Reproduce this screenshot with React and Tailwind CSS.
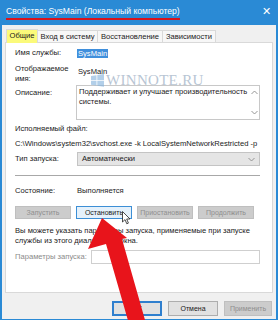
import React from "react";

const F = "font-['Liberation_Sans',Arial,sans-serif]";

function Chevron({ up = false, className = "" }) {
  return (
    <svg width="7" height="5" viewBox="0 0 7 5" className={className}>
      <path d={up ? "M0.5 4 L3.5 1 L6.5 4" : "M0.5 1 L3.5 4 L6.5 1"} fill="none" stroke="#8a8a8a" strokeWidth="0.9" />
    </svg>
  );
}

function Btn({ children, variant = "disabled", className = "" }) {
  const styles = {
    disabled: "bg-[#cccccc] border-[#bfbfbf] text-[#8e8e8e]",
    normal: "bg-[#e1e1e1] border-[#adadad] text-[#1a1a1a]",
    hover: "bg-[#e5f1fb] border-[#3c8fd6] text-[#1a1a1a]",
    def: "bg-[#e1e1e1] border-[#2f7fce] border-2 text-[#1a1a1a]",
  };
  return (
    <div className={`flex items-center justify-center border h-[13px] text-[7px] leading-none whitespace-nowrap ${styles[variant]} ${className}`}>
      {children}
    </div>
  );
}

export default function App() {
  return (
    <div className={`${F} relative w-[278px] h-[320px] overflow-hidden flex flex-col bg-[#2a8ad5]`}>
      {/* Title bar */}
      <div className="h-[25px] shrink-0 flex items-start pl-[6px] pr-[7px] pt-[5px] justify-between">
        <span className="text-white text-[8.6px] leading-[12px] border-b-[2px] border-[#d8141c] pb-[1px] whitespace-nowrap">
          Свойства: SysMain (Локальный компьютер)
        </span>
        <span className="text-white text-[11px] leading-[12px]">✕</span>
      </div>

      {/* Body */}
      <div className="flex-1 mx-[2px] mb-[1px] bg-[#f0f0f0] flex flex-col px-[3px]">
        {/* Tabs */}
        <div className="h-[15px] mt-[2px] flex items-end pl-[1px] relative z-10 text-[7.6px] text-[#1a1a1a] whitespace-nowrap">
          <div className="h-[14px] w-[32px] bg-[#fbfa7a] border border-b-0 border-[#d9d9d9] flex items-center justify-center mb-[-1px] pb-[1px]">
            Общие
          </div>
          <div className="h-[12px] w-[61px] bg-[#f7f7f7] border border-b-0 border-[#d9d9d9] -ml-px flex items-center justify-center">
            Вход в систему
          </div>
          <div className="h-[12px] w-[66px] bg-[#f7f7f7] border border-b-0 border-[#d9d9d9] -ml-px flex items-center justify-center">
            Восстановление
          </div>
          <div className="h-[12px] w-[54px] bg-[#f7f7f7] border border-b-0 border-[#d9d9d9] -ml-px flex items-center justify-center">
            Зависимости
          </div>
        </div>

        {/* Panel */}
        <div className="h-[251px] bg-white border border-[#d9d9d9] flex flex-col pl-[9px] pr-[12px] text-[7.6px] text-[#1a1a1a] relative whitespace-nowrap">
          {/* Имя службы */}
          <div className="mt-[5px] h-[10px] flex items-center">
            <div className="w-[62px]">Имя службы:</div>
            <div className="bg-[#3f8fdc] text-white px-[1px] leading-[9px]">SysMain</div>
          </div>
          {/* Отображаемое имя */}
          <div className="mt-[6px] h-[19px] flex">
            <div className="w-[62px] leading-[9.5px]">
              Отображаемое
              <br />
              имя:
            </div>
            <div className="leading-[9px] mt-[3px] pl-[1px]">SysMain</div>
          </div>
          {/* Описание */}
          <div className="mt-[2px] h-[35px] flex">
            <div className="w-[61px] leading-[9px] mt-[3px]">Описание:</div>
            <div className="flex-1 border border-[#c8c8c8] flex">
              <div className="flex-1 pl-[2px] pt-[1px] leading-[10px]">
                Поддерживает и улучшает производительность
                <br />
                системы.
              </div>
              <div className="w-[10px] flex flex-col items-center justify-between py-[4px]">
                <Chevron up />
                <Chevron />
              </div>
            </div>
          </div>
          {/* Исполняемый файл */}
          <div className="mt-[4px] h-[10px] leading-[10px]">Исполняемый файл:</div>
          <div className="mt-[5px] h-[10px] leading-[10px]">
            C:\Windows\system32\svchost.exe -k LocalSystemNetworkRestricted -p
          </div>
          {/* Тип запуска */}
          <div className="mt-[3px] h-[14px] flex items-center">
            <div className="w-[62px]">Тип запуска:</div>
            <div className="flex-1 h-[14px] bg-[#e5e5e5] border border-[#c4c4c4] flex items-center justify-between pl-[4px] pr-[4px]">
              <span>Автоматически</span>
              <Chevron />
            </div>
          </div>
          {/* Separator */}
          <div className="mt-[9px] h-px bg-[#a8a8a8]" />
          {/* Состояние */}
          <div className="mt-[10px] h-[10px] flex items-center">
            <div className="w-[62px]">Состояние:</div>
            <div>Выполняется</div>
          </div>
          {/* Buttons */}
          <div className="mt-[10px] flex gap-[5px] pr-[5px]">
            <Btn className="w-[56px]">Запустить</Btn>
            <Btn variant="hover" className="w-[56px]">Остановить</Btn>
            <Btn className="w-[56px]">Приостановить</Btn>
            <Btn className="w-[56px]">Продолжить</Btn>
          </div>
          {/* Description */}
          <div className="mt-[7px] leading-[10px]">
            Вы можете указать параметры запуска, применяемые при запуске
            <br />
            службы из этого диалогового окна.
          </div>
          {/* Params */}
          <div className="mt-[4px] h-[14px] flex items-center">
            <div className="w-[76px] text-[#8a8a8a]">Параметры запуска:</div>
            <div className="flex-1 h-[14px] border border-[#cfcfcf] bg-white" />
          </div>

          {/* Watermark */}
          <div className="absolute left-[85px] top-[31px] flex items-end gap-[2px] opacity-60 pointer-events-none">
            <svg width="13" height="13" viewBox="0 0 13 13">
              <path d="M0 2 L5.5 1.2 V6 H0 Z M6.3 1 L13 0 V6 H6.3 Z M0 6.8 H5.5 V11.6 L0 10.8 Z M6.3 6.8 H13 V12.8 L6.3 11.8 Z" fill="#7fb0dc" />
            </svg>
            <span className="font-['Liberation_Serif',serif] text-[15px] leading-[13px] text-[#8aa0b8] tracking-[0.3px]">
              WINNOTE.RU
            </span>
          </div>
        </div>

        {/* Bottom buttons */}
        <div className="flex justify-end gap-[6px] mt-[8px] pr-[1px]">
          <Btn variant="def" className="w-[50px] h-[15px]">ОК</Btn>
          <Btn variant="normal" className="w-[50px] h-[15px]">Отмена</Btn>
          <Btn className="w-[48px] h-[15px]">Применить</Btn>
        </div>
      </div>

      {/* Red arrow annotation */}
      <svg className="absolute left-0 top-0 pointer-events-none" width="278" height="320" viewBox="0 0 278 320">
        <polygon points="102,218 88,249 106,244 129,324 145,320 122,239 127,238" fill="#e8141b" />
      </svg>
      {/* Mouse cursor */}
      <svg className="absolute left-[122px] top-[211px] pointer-events-none" width="9" height="14" viewBox="0 0 9 14">
        <path d="M0.5 0.5 V11 L3 8.6 L4.8 12.8 L6.4 12.1 L4.7 8 H8 Z" fill="white" stroke="#222" strokeWidth="0.8" strokeLinejoin="round" />
      </svg>
    </div>
  );
}
